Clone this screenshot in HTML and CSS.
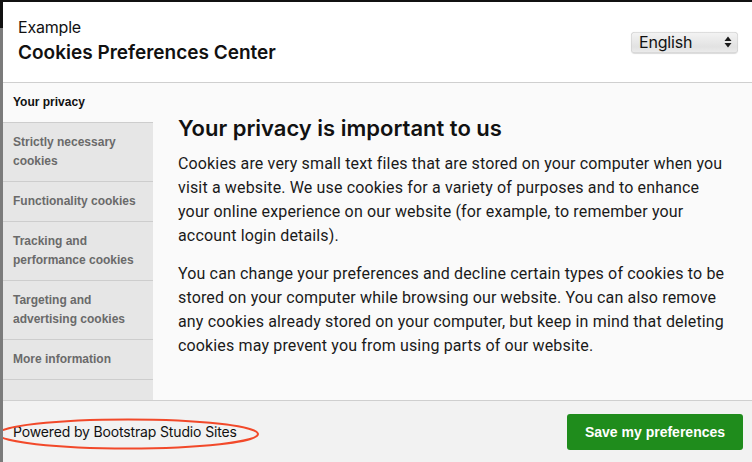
FILE: index.html
```html
<!DOCTYPE html>
<html lang="en">
<head>
<meta charset="utf-8">
<title>Cookies Preferences Center</title>
<link rel="stylesheet" href="styles.css">
</head>
<body>
<div class="page">
  <div class="backdrop-edge"><div class="edge-top"></div><div class="edge-bottom"></div></div>
  <div class="modal">
    <header class="modal-header">
      <div class="titles">
        <div class="site-name">Example</div>
        <div class="modal-title">Cookies Preferences Center</div>
      </div>
      <div class="lang-select">
        <span class="lang-label">English</span>
        <svg class="lang-arrows" width="8" height="12" viewBox="0 0 8 12"><path d="M4 0.5 L7.5 5 H0.5 Z M4 11.5 L7.5 7 H0.5 Z" fill="#1a1a1a"/></svg>
      </div>
    </header>
    <div class="modal-body">
      <nav class="sidebar">
        <div class="tab active">Your privacy</div>
        <div class="tab">Strictly necessary cookies</div>
        <div class="tab">Functionality cookies</div>
        <div class="tab">Tracking and performance cookies</div>
        <div class="tab">Targeting and advertising cookies</div>
        <div class="tab">More information</div>
      </nav>
      <main class="content">
        <h2 class="content-title">Your privacy is important to us</h2>
        <p>Cookies are very small text files that are stored on your computer when you visit a website. We use cookies for a variety of purposes and to enhance your online experience on our website (for example, to remember your account login details).</p>
        <p>You can change your preferences and decline certain types of cookies to be stored on your computer while browsing our website. You can also remove any cookies already stored on your computer, but keep in mind that deleting cookies may prevent you from using parts of our website.</p>
      </main>
    </div>
    <footer class="modal-footer">
      <div class="powered">Powered by Bootstrap Studio Sites</div>
      <button class="save-btn">Save my preferences</button>
      <svg class="annotation" width="262" height="34" viewBox="0 0 262 34"><ellipse cx="128" cy="17" rx="130" ry="14.5" fill="none" stroke="#f2492a" stroke-width="2"/></svg>
    </footer>
  </div>
</div>
</body>
</html>
```

FILE: styles.css
```css
html, body {
  margin: 0;
  padding: 0;
  background: #111;
}
body {
  width: 752px;
  height: 462px;
  overflow: hidden;
  font-family: Inter, "Liberation Sans", sans-serif;
  color: #1a1a1a;
}
.page {
  display: flex;
  height: 462px;
  padding-top: 2px;
  box-sizing: border-box;
}
.backdrop-edge {
  width: 3px;
  display: flex;
  flex-direction: column;
  margin-top: -2px;
}
.edge-top {
  height: 28px;
  background: #111;
}
.edge-bottom {
  flex: 1;
  background: #7b7b7b;
}
.modal {
  flex: 1;
  display: flex;
  flex-direction: column;
  background: #fafafa;
  position: relative;
  overflow: hidden;
}
.modal-header {
  height: 80px;
  flex-shrink: 0;
  background: #fff;
  border-bottom: 1px solid #cfcfcf;
  display: flex;
  align-items: center;
  justify-content: space-between;
  padding: 0 14px 0 15px;
}
.titles {
  display: flex;
  flex-direction: column;
  margin-top: -3px;
}
.site-name {
  font-size: 16px;
  line-height: 24px;
  color: #111;
  letter-spacing: -0.2px;
}
.modal-title {
  font-size: 19px;
  line-height: 28px;
  font-weight: 600;
  color: #111;
}
.lang-select {
  width: 107px;
  height: 21px;
  box-sizing: border-box;
  margin-top: 0;
  border-radius: 4px;
  background: linear-gradient(#f4f4f4, #e2e2e2 70%, #ececec);
  box-shadow: inset 0 0 0 0.5px #c8c8c8, 0 0.5px 1px rgba(0,0,0,0.15);
  display: flex;
  align-items: center;
  justify-content: space-between;
  padding: 0 6px 0 8px;
}
.lang-label {
  font-size: 16px;
  color: #111;
  letter-spacing: -0.2px;
}
.modal-body {
  flex: 1;
  display: flex;
  border-bottom: 1px solid #cfcfcf;
  min-height: 0;
}
.sidebar {
  width: 150px;
  flex-shrink: 0;
  background: #e6e6e6;
  display: flex;
  flex-direction: column;
}
.tab {
  font-family: "Liberation Sans", Arial, sans-serif;
  font-size: 12px;
  font-weight: bold;
  line-height: 19px;
  color: #6a6a6a;
  padding: 10px 10px;
  border-bottom: 1px solid #cdcdcd;
}
.tab.active {
  background: #fafafa;
  color: #111;
}
.content {
  flex: 1;
  padding: 31px 23px 0 25px;
}
.content-title {
  margin: 0 0 10px;
  font-size: 22px;
  line-height: 28px;
  font-weight: 600;
  color: #111;
}
.content p {
  margin: 0 0 14px;
  font-family: Roboto, Inter, sans-serif;
  font-size: 16px;
  line-height: 24px;
  letter-spacing: 0.15px;
  color: #1a1a1a;
}
.modal-footer {
  height: 61px;
  flex-shrink: 0;
  background: #f2f2f2;
  display: flex;
  align-items: flex-start;
  justify-content: space-between;
  padding: 13px 9px 0 10px;
  box-sizing: border-box;
  position: relative;
}
.powered {
  font-size: 14px;
  line-height: 20px;
  margin-top: 8px;
  letter-spacing: -0.15px;
  color: #111;
}
.save-btn {
  width: 176px;
  height: 36px;
  border: none;
  border-radius: 3px;
  background: #1f8c1c;
  color: #fff;
  font-family: "Liberation Sans", Arial, sans-serif;
  font-weight: bold;
  font-size: 14px;
  padding: 0;
}
.annotation {
  position: absolute;
  left: -3px;
  top: 16px;
}
```
